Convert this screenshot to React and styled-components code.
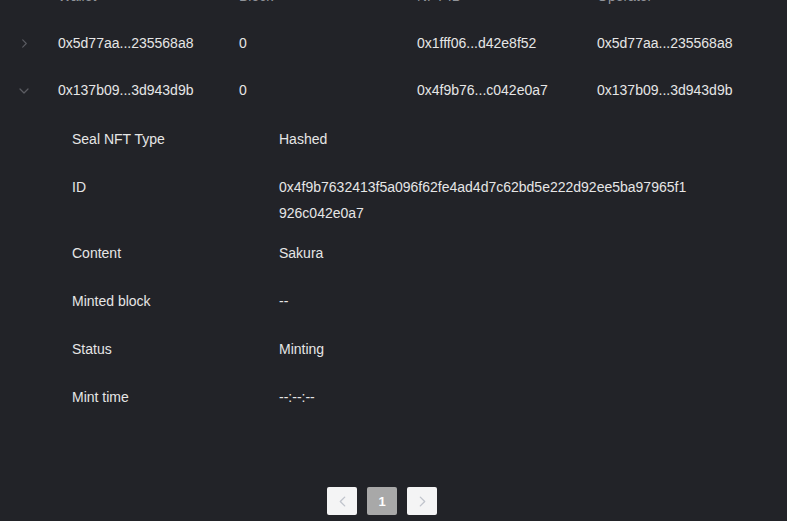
import styled, { createGlobalStyle } from 'styled-components';

const GlobalStyle = createGlobalStyle`
  html, body {
    margin: 0;
    padding: 0;
    background: #222328;
  }
  body {
    font-family: "Liberation Sans", Arial, sans-serif;
    font-size: 14px;
    color: #e6e6e6;
    overflow: hidden;
  }
`;

const Page = styled.div`
  width: 787px;
  height: 521px;
  overflow: hidden;
  background: #222328;
`;

const Table = styled.div`
  margin-top: -27px;
`;

const Row = styled.div`
  display: grid;
  grid-template-columns: 48px 181px 178px 180px 1fr;
  align-items: center;
  height: 47px;
  color: ${(props) => (props.head ? '#909399' : '#e6e6e6')};
`;

const Cell = styled.div`
  padding: 0 10px;
  line-height: 23px;
  white-space: nowrap;
`;

const ExpandCell = styled.div`
  display: flex;
  justify-content: center;
  align-items: center;
  height: 100%;
  color: #5c5d63;
`;

const Details = styled.div`
  padding: 1px 0 0 72px;
`;

const DetailRow = styled.div`
  display: grid;
  grid-template-columns: 207px 1fr;
  box-sizing: border-box;
  min-height: 48px;
  padding: 11px 0 3px;
  line-height: 26px;
`;

const Label = styled.div`
  color: #e6e6e6;
`;

const Value = styled.div`
  color: #e6e6e6;
  max-width: 411px;
  word-break: break-all;
`;

const Pager = styled.div`
  display: flex;
  justify-content: center;
  gap: 10px;
  padding-right: 23px;
  margin-top: 66px;
`;

const PageBtn = styled.button`
  width: 30px;
  height: 28px;
  padding: 0;
  border: none;
  border-radius: 2px;
  display: flex;
  align-items: center;
  justify-content: center;
  font-family: "Liberation Sans", Arial, sans-serif;
  font-size: 13px;
  font-weight: bold;
  background: ${(props) => (props.active ? '#a8a8a8' : '#f4f4f5')};
  color: ${(props) => (props.active ? '#ffffff' : '#c0c4cc')};
`;

const Chevron = ({ dir = 'right', size = 8 }) => {
  const paths = {
    right: 'M3 1 L7 5 L3 9',
    down: 'M1 3 L5 7 L9 3',
    left: 'M7 1 L3 5 L7 9',
  };
  return (
    <svg width={size} height={size} viewBox="0 0 10 10" fill="none">
      <path d={paths[dir]} stroke="currentColor" strokeWidth="1.2" strokeLinecap="round" strokeLinejoin="round" />
    </svg>
  );
};

const rows = [
  { tx: '0x5d77aa...235568a8', block: '0', nft: '0x1fff06...d42e8f52', op: '0x5d77aa...235568a8', open: false },
  { tx: '0x137b09...3d943d9b', block: '0', nft: '0x4f9b76...c042e0a7', op: '0x137b09...3d943d9b', open: true },
];

const details = [
  ['Seal NFT Type', 'Hashed'],
  ['ID', '0x4f9b7632413f5a096f62fe4ad4d7c62bd5e222d92ee5ba97965f1926c042e0a7'],
  ['Content', 'Sakura'],
  ['Minted block', '--'],
  ['Status', 'Minting'],
  ['Mint time', '--:--:--'],
];

export default function App() {
  return (
    <Page>
      <GlobalStyle />
      <Table>
        <Row head>
          <ExpandCell />
          <Cell>Wallet</Cell>
          <Cell>Block</Cell>
          <Cell>NFT ID</Cell>
          <Cell>Operator</Cell>
        </Row>
        {rows.map((r) => (
          <div key={r.tx}>
            <Row>
              <ExpandCell>
                <Chevron dir={r.open ? 'down' : 'right'} size={r.open ? 10 : 9} />
              </ExpandCell>
              <Cell>{r.tx}</Cell>
              <Cell>{r.block}</Cell>
              <Cell>{r.nft}</Cell>
              <Cell>{r.op}</Cell>
            </Row>
            {r.open && (
              <Details>
                {details.map(([k, v]) => (
                  <DetailRow key={k}>
                    <Label>{k}</Label>
                    <Value>{v}</Value>
                  </DetailRow>
                ))}
              </Details>
            )}
          </div>
        ))}
      </Table>
      <Pager>
        <PageBtn>
          <Chevron dir="left" size={11} />
        </PageBtn>
        <PageBtn active>1</PageBtn>
        <PageBtn>
          <Chevron dir="right" size={11} />
        </PageBtn>
      </Pager>
    </Page>
  );
}
